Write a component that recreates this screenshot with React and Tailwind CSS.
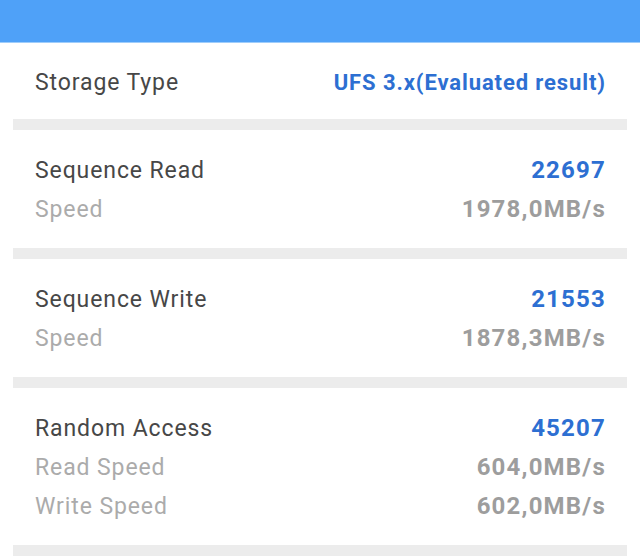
import React from 'react';

const font = { fontFamily: 'Roboto, "Noto Sans", sans-serif' };

const Divider = () => <div className="mx-[13px] h-[11px] bg-[#ececec]" />;

const Row = ({ label, value, main }) => (
  <div className="flex items-center justify-between h-[39px]">
    <span className={main ? 'pt-[4px] text-[23px] tracking-[0.9px] text-[#474747]' : 'pt-[4px] text-[23px] tracking-[0.9px] text-[#ababab]'}>{label}</span>
    <span className={main ? 'pt-[1px] text-[24px] tracking-[1.2px] -mr-[1px] font-bold text-[#2d6fd2]' : 'pt-[1px] text-[24px] tracking-[1.2px] -mr-[1px] font-bold text-[#9d9d9d]'}>{value}</span>
  </div>
);

const Section = ({ rows }) => (
  <div className="px-[35px] pt-[20px] pb-[20px]">
    {rows.map((r, i) => (
      <Row key={i} label={r[0]} value={r[1]} main={i === 0} />
    ))}
  </div>
);

export default function App() {
  return (
    <div className="w-[640px] h-[560px] bg-white overflow-hidden" style={font}>
      <div className="h-[43px] bg-[#4fa1f8] border-b border-[#9fcdfb]" />
      <div className="flex items-center justify-between h-[76px] px-[35px]">
        <span className="pt-[4px] text-[23px] tracking-[0.9px] text-[#474747]">Storage Type</span>
        <span className="pt-[2px] text-[22px] tracking-[0.9px] -mr-[1px] font-bold text-[#2d6fd2]">UFS 3.x(Evaluated result)</span>
      </div>
      <Divider />
      <Section rows={[['Sequence Read', '22697'], ['Speed', '1978,0MB/s']]} />
      <Divider />
      <Section rows={[['Sequence Write', '21553'], ['Speed', '1878,3MB/s']]} />
      <Divider />
      <Section rows={[['Random Access', '45207'], ['Read Speed', '604,0MB/s'], ['Write Speed', '602,0MB/s']]} />
      <Divider />
    </div>
  );
}
